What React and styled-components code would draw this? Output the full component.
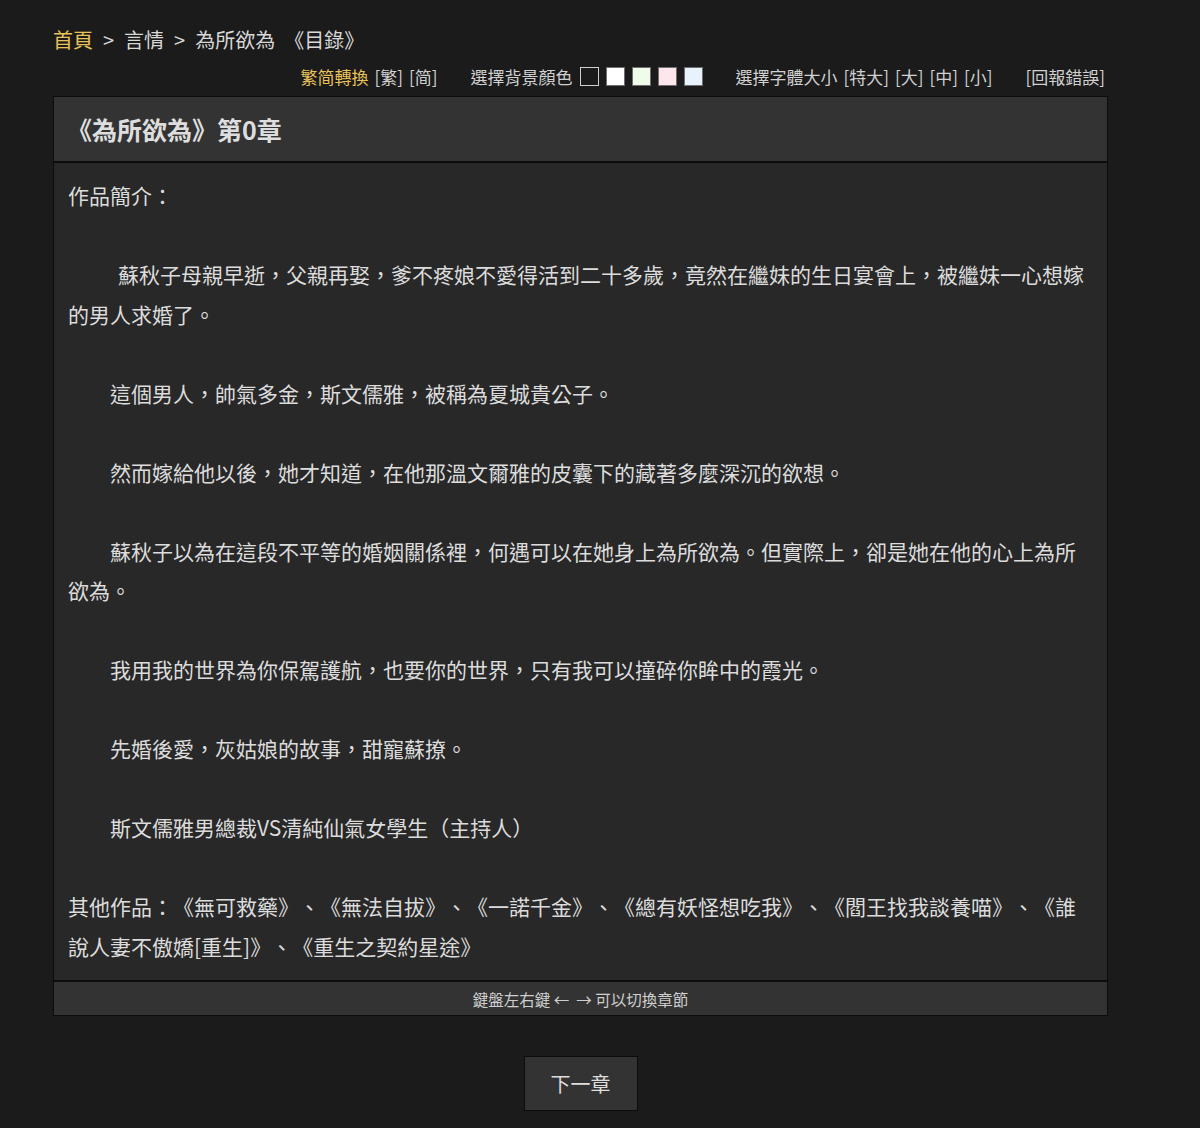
import React from 'react';
import styled, { createGlobalStyle } from 'styled-components';

const GlobalStyle = createGlobalStyle`
  html, body {
    margin: 0;
    padding: 0;
    background: #1b1b1b;
  }
  body {
    font-family: "Noto Sans CJK TC", "Noto Sans", sans-serif;
    color: #dcdcdc;
    text-spacing-trim: space-all;
  }
`;

const Page = styled.div`
  width: 1055px;
  margin-left: 53px;
  padding-top: 26px;
  padding-bottom: 17px;
`;

const Crumbs = styled.div`
  display: flex;
  align-items: center;
  font-size: 20px;
  line-height: 28px;
  color: #d8d8d8;
  white-space: pre;

  a {
    color: #e8c25a;
    text-decoration: none;
  }
`;

const Sep = styled.span`
  margin: 0 10px;
`;

const Toolbar = styled.div`
  display: flex;
  justify-content: flex-end;
  align-items: center;
  gap: 33px;
  margin-top: 8px;
  padding-right: 3px;
  height: 28px;
  font-size: 17px;
  color: #d0d0d0;
`;

const ToolItem = styled.span`
  display: inline-flex;
  align-items: center;
  gap: 6px;
  white-space: nowrap;
`;

const ToolLabel = styled.span`
  color: ${(p) => (p.$accent ? '#e8c25a' : '#d0d0d0')};
`;

const Swatch = styled.span`
  display: inline-block;
  width: 17px;
  height: 17px;
  margin-left: 1px;
  background: ${(p) => p.$color};
  border: 1px solid ${(p) => (p.$first ? '#cfcfcf' : '#6e6e6e')};
`;

const Book = styled.div`
  margin-top: 6px;
  border: 1px solid #0c0c0c;
  background: #282828;
`;

const TitleBar = styled.div`
  background: #333333;
  height: 64px;
  display: flex;
  align-items: center;
  padding-left: 13px;
  border-bottom: 2px solid #0c0c0c;

  h1 {
    margin: 0;
    font-size: 25px;
    font-weight: 700;
    color: #dedede;
  }
`;

const Content = styled.div`
  padding: 13px 14px 14px;
  font-size: 21px;
  line-height: 39.5px;
  color: #dcdcdc;
`;

const Para = styled.p`
  margin: 0 0 39.5px;
  text-indent: ${(p) => p.$indent || '0'};

  &:last-child {
    margin-bottom: 0;
  }
`;

const FootBar = styled.div`
  border-top: 2px solid #0c0c0c;
  background: #333333;
  height: 33px;
  display: flex;
  align-items: center;
  justify-content: center;
  font-size: 15.5px;
  color: #cfcfcf;
  white-space: pre;
`;

const Nav = styled.div`
  display: flex;
  justify-content: center;
  margin-top: 40px;
`;

const NavButton = styled.button`
  width: 114px;
  height: 55px;
  background: #333333;
  border: 1px solid #0c0c0c;
  color: #dedede;
  font-family: inherit;
  font-size: 20px;
  cursor: pointer;
`;

const swatches = ['#1b1b1b', '#ffffff', '#f1fbe9', '#fde7ec', '#e8f2fc'];

const paragraphs = [
  { text: '作品簡介：' },
  {
    text: '蘇秋子母親早逝，父親再娶，爹不疼娘不愛得活到二十多歲，竟然在繼妹的生日宴會上，被繼妹一心想嫁的男人求婚了。',
    indent: '50px',
  },
  { text: '這個男人，帥氣多金，斯文儒雅，被稱為夏城貴公子。', indent: '42px' },
  { text: '然而嫁給他以後，她才知道，在他那溫文爾雅的皮囊下的藏著多麼深沉的欲想。', indent: '42px' },
  {
    text: '蘇秋子以為在這段不平等的婚姻關係裡，何遇可以在她身上為所欲為。但實際上，卻是她在他的心上為所欲為。',
    indent: '42px',
  },
  { text: '我用我的世界為你保駕護航，也要你的世界，只有我可以撞碎你眸中的霞光。', indent: '42px' },
  { text: '先婚後愛，灰姑娘的故事，甜寵蘇撩。', indent: '42px' },
  { text: '斯文儒雅男總裁VS清純仙氣女學生（主持人）', indent: '42px' },
  {
    text: '其他作品：《無可救藥》、《無法自拔》、《一諾千金》、《總有妖怪想吃我》、《閻王找我談養喵》、《誰說人妻不傲嬌[重生]》、《重生之契約星途》',
  },
];

const App = () => (
  <>
    <GlobalStyle />
    <Page>
      <Crumbs>
        <a href="#">首頁</a>
        <Sep>&gt;</Sep>
        <span>言情</span>
        <Sep>&gt;</Sep>
        <span>為所欲為  《目錄》</span>
      </Crumbs>
      <Toolbar>
        <ToolItem>
          <ToolLabel $accent>繁简轉換</ToolLabel>
          <ToolLabel>[繁]</ToolLabel>
          <ToolLabel>[简]</ToolLabel>
        </ToolItem>
        <ToolItem>
          <ToolLabel>選擇背景顏色</ToolLabel>
          {swatches.map((c, i) => (
            <Swatch key={c} $color={c} $first={i === 0} />
          ))}
        </ToolItem>
        <ToolItem>
          <ToolLabel>選擇字體大小</ToolLabel>
          <ToolLabel>[特大]</ToolLabel>
          <ToolLabel>[大]</ToolLabel>
          <ToolLabel>[中]</ToolLabel>
          <ToolLabel>[小]</ToolLabel>
        </ToolItem>
        <ToolItem>
          <ToolLabel>[回報錯誤]</ToolLabel>
        </ToolItem>
      </Toolbar>
      <Book>
        <TitleBar>
          <h1>《為所欲為》第0章</h1>
        </TitleBar>
        <Content>
          {paragraphs.map((p, i) => (
            <Para key={i} $indent={p.indent}>
              {p.text}
            </Para>
          ))}
        </Content>
        <FootBar>鍵盤左右鍵 ←  → 可以切換章節</FootBar>
      </Book>
      <Nav>
        <NavButton>下一章</NavButton>
      </Nav>
    </Page>
  </>
);

export default App;
